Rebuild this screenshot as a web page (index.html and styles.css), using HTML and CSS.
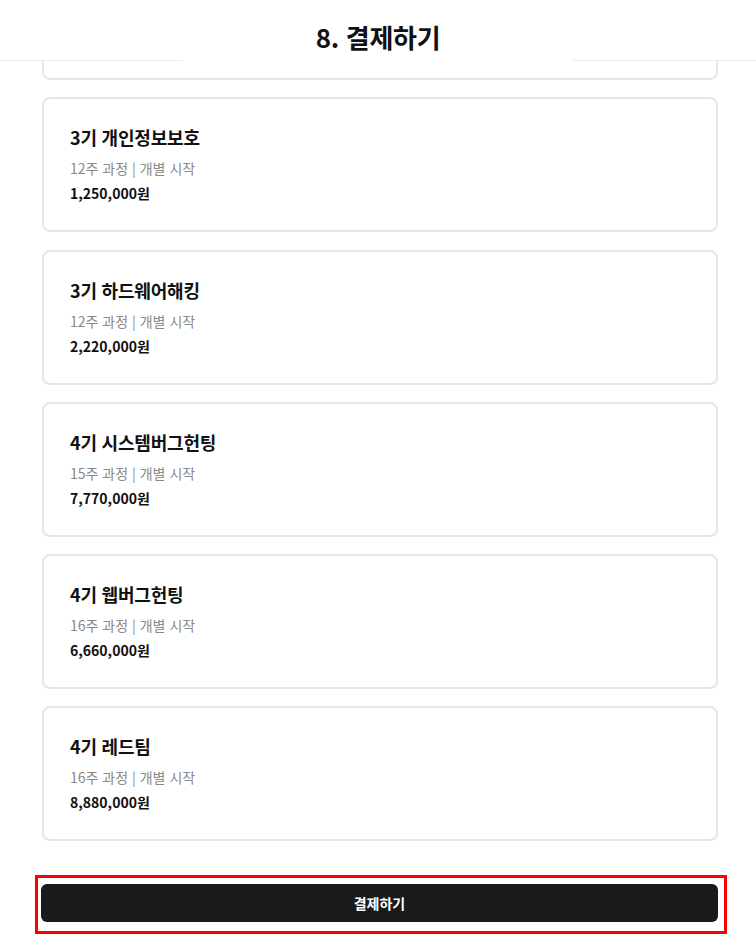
FILE: index.html
```html
<!DOCTYPE html>
<html lang="ko">
<head>
    <meta charset="UTF-8">
    <meta name="viewport" content="width=device-width, initial-scale=1.0">
    <title>8. 결제하기</title>
    <link rel="stylesheet" href="styles.css">
</head>
<body>
    <header class="top-bar">
        <h1>8. 결제하기</h1>
    </header>

    <main class="course-list">
        <div class="course-card card-cut"></div>

        <div class="course-card">
            <h2>3기 개인정보보호</h2>
            <p class="course-meta">12주 과정 | 개별 시작</p>
            <p class="course-price">1,250,000원</p>
        </div>

        <div class="course-card">
            <h2>3기 하드웨어해킹</h2>
            <p class="course-meta">12주 과정 | 개별 시작</p>
            <p class="course-price">2,220,000원</p>
        </div>

        <div class="course-card">
            <h2>4기 시스템버그헌팅</h2>
            <p class="course-meta">15주 과정 | 개별 시작</p>
            <p class="course-price">7,770,000원</p>
        </div>

        <div class="course-card">
            <h2>4기 웹버그헌팅</h2>
            <p class="course-meta">16주 과정 | 개별 시작</p>
            <p class="course-price">6,660,000원</p>
        </div>

        <div class="course-card">
            <h2>4기 레드팀</h2>
            <p class="course-meta">16주 과정 | 개별 시작</p>
            <p class="course-price">8,880,000원</p>
        </div>
    </main>

    <div class="pay-box">
        <button type="button" class="pay-button">결제하기</button>
    </div>
</body>
</html>
```

FILE: styles.css
```css
body {
    margin: 0;
    font-family: "Noto Sans CJK KR", "Noto Sans", sans-serif;
    background-color: #fff;
    color: #111;
}

.top-bar {
    position: relative;
    height: 60px;
    border-bottom: 1px solid #ececec;
    display: flex;
    align-items: center;
    justify-content: center;
}

/* white strip that hides the middle of the header line */
.top-bar::after {
    content: "";
    position: absolute;
    left: 183px;
    width: 389px;
    bottom: -1px;
    height: 1px;
    background-color: #fff;
}

.top-bar h1 {
    margin: 0;
    padding-top: 12px;
    font-size: 26px;
    font-weight: 700;
    letter-spacing: -0.3px;
}

.course-list {
    display: flex;
    flex-direction: column;
    gap: 17.25px;
    width: 676px;
    margin-left: 42px;
}

.course-card {
    box-sizing: border-box;
    height: 135px;
    padding: 24px 26px;
    border: 2px solid #e6e6e6;
    border-radius: 8px;
}

.card-cut {
    height: 19px;
    padding: 0;
    border-top: none;
    border-top-left-radius: 0;
    border-top-right-radius: 0;
}

.course-card h2 {
    margin: 0;
    font-size: 18px;
    font-weight: 700;
    line-height: 28px;
    letter-spacing: -0.2px;
}

.course-meta {
    margin: 6px 0 0;
    font-size: 14px;
    line-height: 22px;
    color: #8a8a8a;
}

.course-price {
    margin: 3px 0 0;
    font-size: 14px;
    line-height: 22px;
    font-weight: 700;
}

.pay-box {
    box-sizing: border-box;
    width: 692px;
    height: 59px;
    margin: 34px 0 0 35px;
    padding: 6px 6px 0 3px;
    border: 3px solid #ff0000;
}

.pay-button {
    display: block;
    width: 677px;
    height: 38px;
    border: none;
    border-radius: 6px;
    background-color: #1a1a1a;
    color: #fff;
    font-family: inherit;
    font-size: 14px;
    font-weight: 700;
    cursor: pointer;
}
```
